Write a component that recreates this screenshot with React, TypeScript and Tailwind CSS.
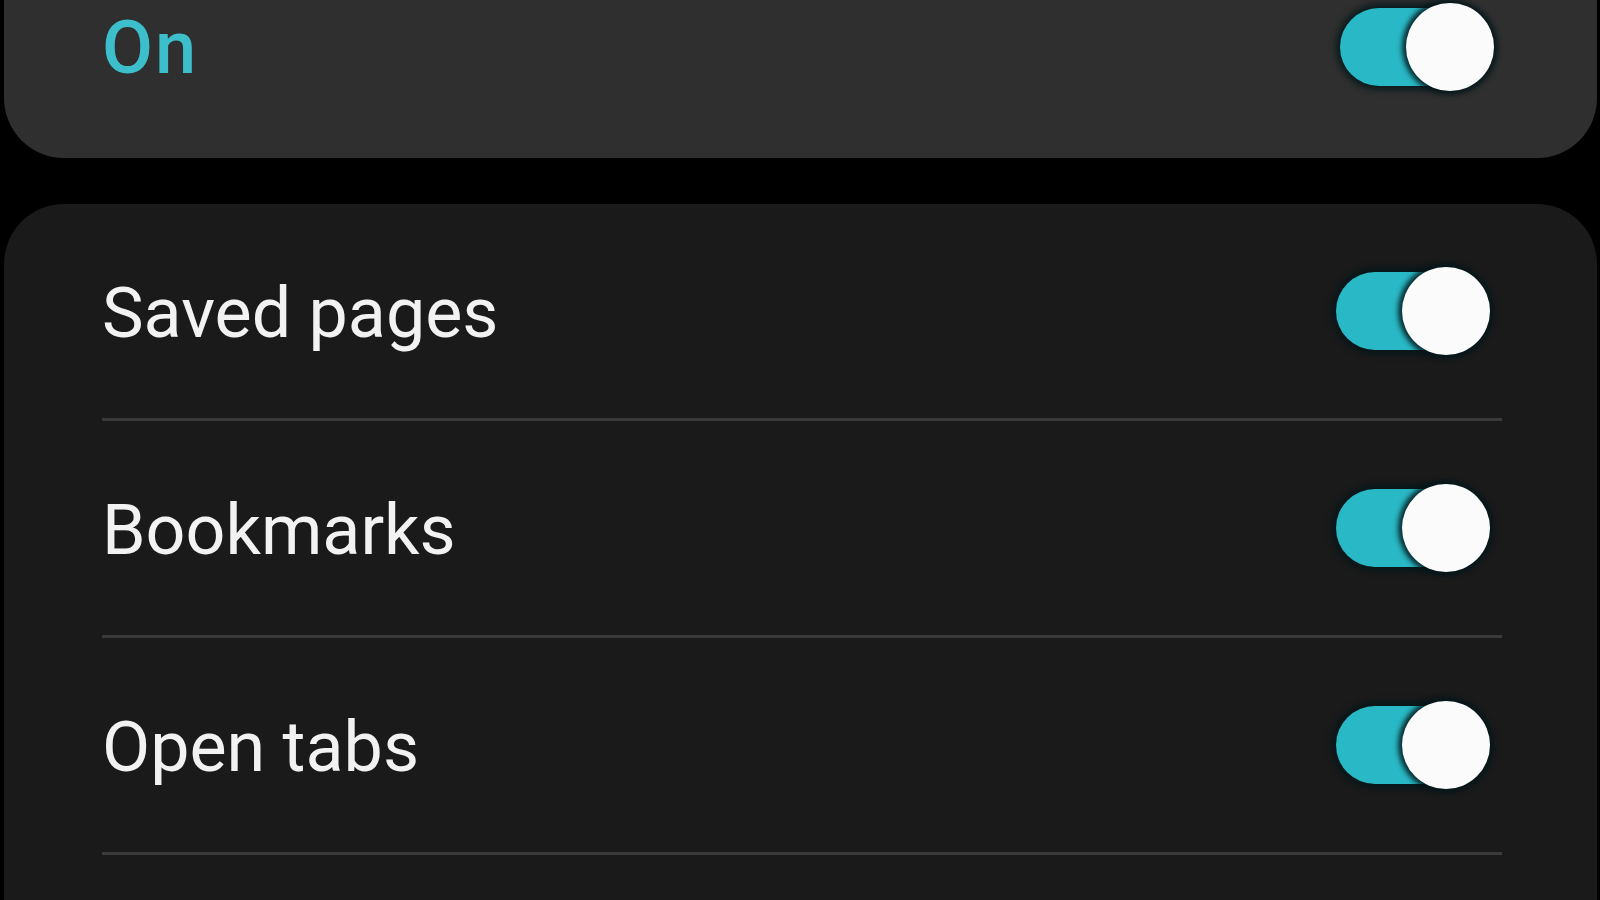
import React from 'react';

const rows = ['Saved pages', 'Bookmarks', 'Open tabs'];

function Toggle() {
  return (
    <div className="relative w-[156px] h-[92px] flex items-center">
      {/* track */}
      <div className="absolute left-[2px] right-[14px] h-[78px] rounded-full bg-[#29b8c5] shadow-[0_0_6px_4px_rgba(4,22,26,0.85)]" />
      {/* thumb */}
      <div className="absolute right-0 w-[88px] h-[88px] rounded-full bg-[#fbfbfb] shadow-[0_0_5px_4px_rgba(4,22,26,0.85)]" />
    </div>
  );
}

export default function App() {
  return (
    <div
      className="w-[1600px] h-[900px] overflow-hidden bg-black pl-[4px] pr-[3px]"
      style={{ fontFamily: 'Roboto, "Liberation Sans", sans-serif' }}
    >
      {/* Master switch */}
      <div className="h-[158px] rounded-b-[60px] bg-[#2f2f2f] pl-[98px] pr-[103px] flex items-start justify-between">
        <div className="h-[96px] flex items-center text-[74px] font-medium tracking-[2px] text-[#3cbfca] leading-none">
          On
        </div>
        <div className="h-[94px] flex items-center">
          <Toggle />
        </div>
      </div>

      {/* Sync items */}
      <div className="mt-[46px] h-[800px] rounded-t-[60px] bg-[#1a1a1a] pl-[98px] pr-[95px]">
        {rows.map((label) => (
          <div key={label}>
            <div className="h-[214px] flex items-center justify-between pr-[12px]">
              <span className="text-[70px] text-[#f2f2f2] leading-none pt-[4px]">{label}</span>
              <Toggle />
            </div>
            <div className="h-[3px] bg-[#3a3a3a]" />
          </div>
        ))}
      </div>
    </div>
  );
}
